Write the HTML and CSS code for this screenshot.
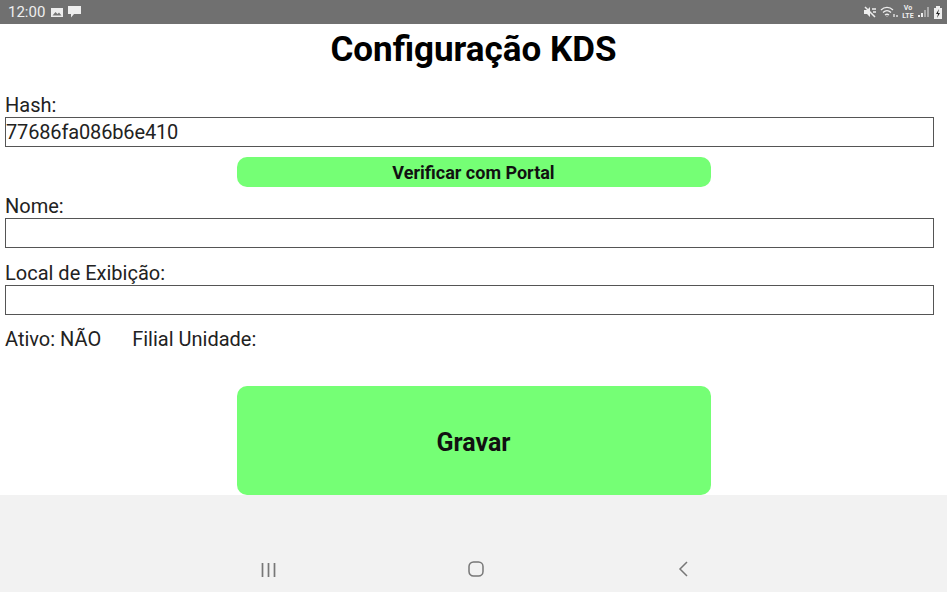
FILE: index.html
```html
<!DOCTYPE html>
<html lang="pt">
<head>
<meta charset="utf-8">
<title>Configuração KDS</title>
<link rel="stylesheet" href="styles.css">
</head>
<body>
<header class="status">
  <div class="status-left">
    <span class="clock">12:00</span>
    <svg class="ic" width="12" height="11" viewBox="0 0 12 11"><path fill="#eee" d="M0 1h12v9H0z"/><path fill="#777" d="M1.500 8.500 4.500 5l2 2 1.500-1.500 2.500 3z"/></svg>
    <svg class="ic" width="13" height="12" viewBox="0 0 13 12"><path fill="#eee" d="M0 0h13v8H6l-3 3.500V8H0z"/></svg>
  </div>
  <div class="status-right">
    <svg width="13" height="12" viewBox="0 0 13 12"><path fill="#eee" d="M0 4h3l3-3v10L3 8H0z"/><path stroke="#eee" stroke-width="1.500" d="M1 1l10 10M8 3h4M9 6h3"/></svg>
    <svg width="18" height="12" viewBox="0 0 18 12" fill="none" stroke="#eee" stroke-width="1.300"><path d="M1 4c3.500-3.500 8.500-3.500 12 0M3 6.500c2.500-2.300 5.500-2.300 8 0M5 9c1.300-1 2.700-1 4 0"/><path d="M7 10.500v.5M14 8v3M17 9v2"/></svg>
    <span class="net">Vo<br>LTE</span>
    <svg width="13" height="12" viewBox="0 0 13 12"><path fill="#eee" d="M0 9h2v2H0zM3 7h2v4H3z"/><path fill="#aaa" d="M6 4h2v7H6zM9 1h2v10H9z"/></svg>
    <svg width="8" height="13" viewBox="0 0 8 13"><path fill="#eee" d="M0 2h2V0h4v2h2v11H0z"/><path fill="#222" d="M5 3 2 8h2l-1 4 3-5H4z"/></svg>
  </div>
</header>
<main class="page">
  <h1 class="title">Configuração KDS</h1>
  <label class="label first">Hash:</label>
  <div class="field">77686fa086b6e410</div>
  <button class="btn btn-small" type="button">Verificar com Portal</button>
  <label class="label name">Nome:</label>
  <div class="field"></div>
  <label class="label local">Local de Exibição:</label>
  <div class="field"></div>
  <div class="info">
    <span>Ativo: NÃO</span>
    <span>Filial Unidade:</span>
  </div>
  <button class="btn btn-large" type="button">Gravar</button>
</main>
<footer class="nav">
  <svg width="15" height="14" viewBox="0 0 15 14" fill="none" stroke="#777" stroke-width="1.700"><path d="M1.500 0v14M7.500 0v14M13.500 0v14"/></svg>
  <svg width="16" height="16" viewBox="0 0 16 16" fill="none" stroke="#777" stroke-width="1.500"><rect x="1" y="1" width="14" height="14" rx="4.500"/></svg>
  <svg width="12" height="16" viewBox="0 0 12 16" fill="none" stroke="#777" stroke-width="1.500"><path d="M11 1 4 8l7 7"/></svg>
</footer>
</body>
</html>
```
FILE: styles.css
```css
* { box-sizing: border-box; }
html, body { margin: 0; padding: 0; }
body {
  width: 947px;
  height: 592px;
  overflow: hidden;
  background: #fff;
  color: #111;
  font-family: Roboto, "Liberation Sans", sans-serif;
  display: flex;
  flex-direction: column;
}
.status {
  height: 24px;
  flex: none;
  background: #707070;
  color: #eee;
  display: flex;
  align-items: center;
  justify-content: space-between;
  padding: 0 5px 0 8px;
}
.status-left, .status-right { display: flex; align-items: center; }
.status-left { gap: 5px; }
.status-right { gap: 3px; }
.clock { font-size: 15px; margin-right: 1px; }
.net { font-size: 7px; line-height: 8px; font-weight: 700; text-align: center; width: 14px; }
.page {
  height: 471px;
  flex: none;
  display: flex;
  flex-direction: column;
}
.title {
  margin: 6px 0 0;
  font-size: 35px;
  line-height: 39px;
  font-weight: 700;
  text-align: center;
  color: #000;
}
.label { margin-left: 5px; font-size: 20px; line-height: 22px; color: #222; }
.label.first { margin-top: 25px; }
.label.name { margin-top: 8px; }
.label.local { margin-top: 14px; }
.field {
  width: 929px;
  height: 30px;
  margin: 1px 0 0 5px;
  border: 1px solid #555;
  font-size: 20px;
  line-height: 29px;
  letter-spacing: -0.15px;
  color: #222;
  background: #fff;
}
.btn {
  display: block;
  align-self: center;
  width: 474px;
  border: 0;
  padding: 0;
  background: #75ff75;
  color: #111;
  font-family: inherit;
  font-weight: 700;
}
.btn-small { height: 30px; margin-top: 10px; font-size: 18px; border-radius: 10px; }
.btn-large { height: 109px; margin-top: 36px; padding-top: 3px; font-size: 25px; border-radius: 10px; }
.info { display: flex; gap: 31px; margin: 13px 0 0 5px; font-size: 20px; line-height: 22px; color: #222; }
.nav {
  flex: 1;
  background: #f2f2f2;
  display: flex;
  align-items: flex-end;
  justify-content: center;
  gap: 192px;
  padding: 0 0 15px 2px;
}
```
